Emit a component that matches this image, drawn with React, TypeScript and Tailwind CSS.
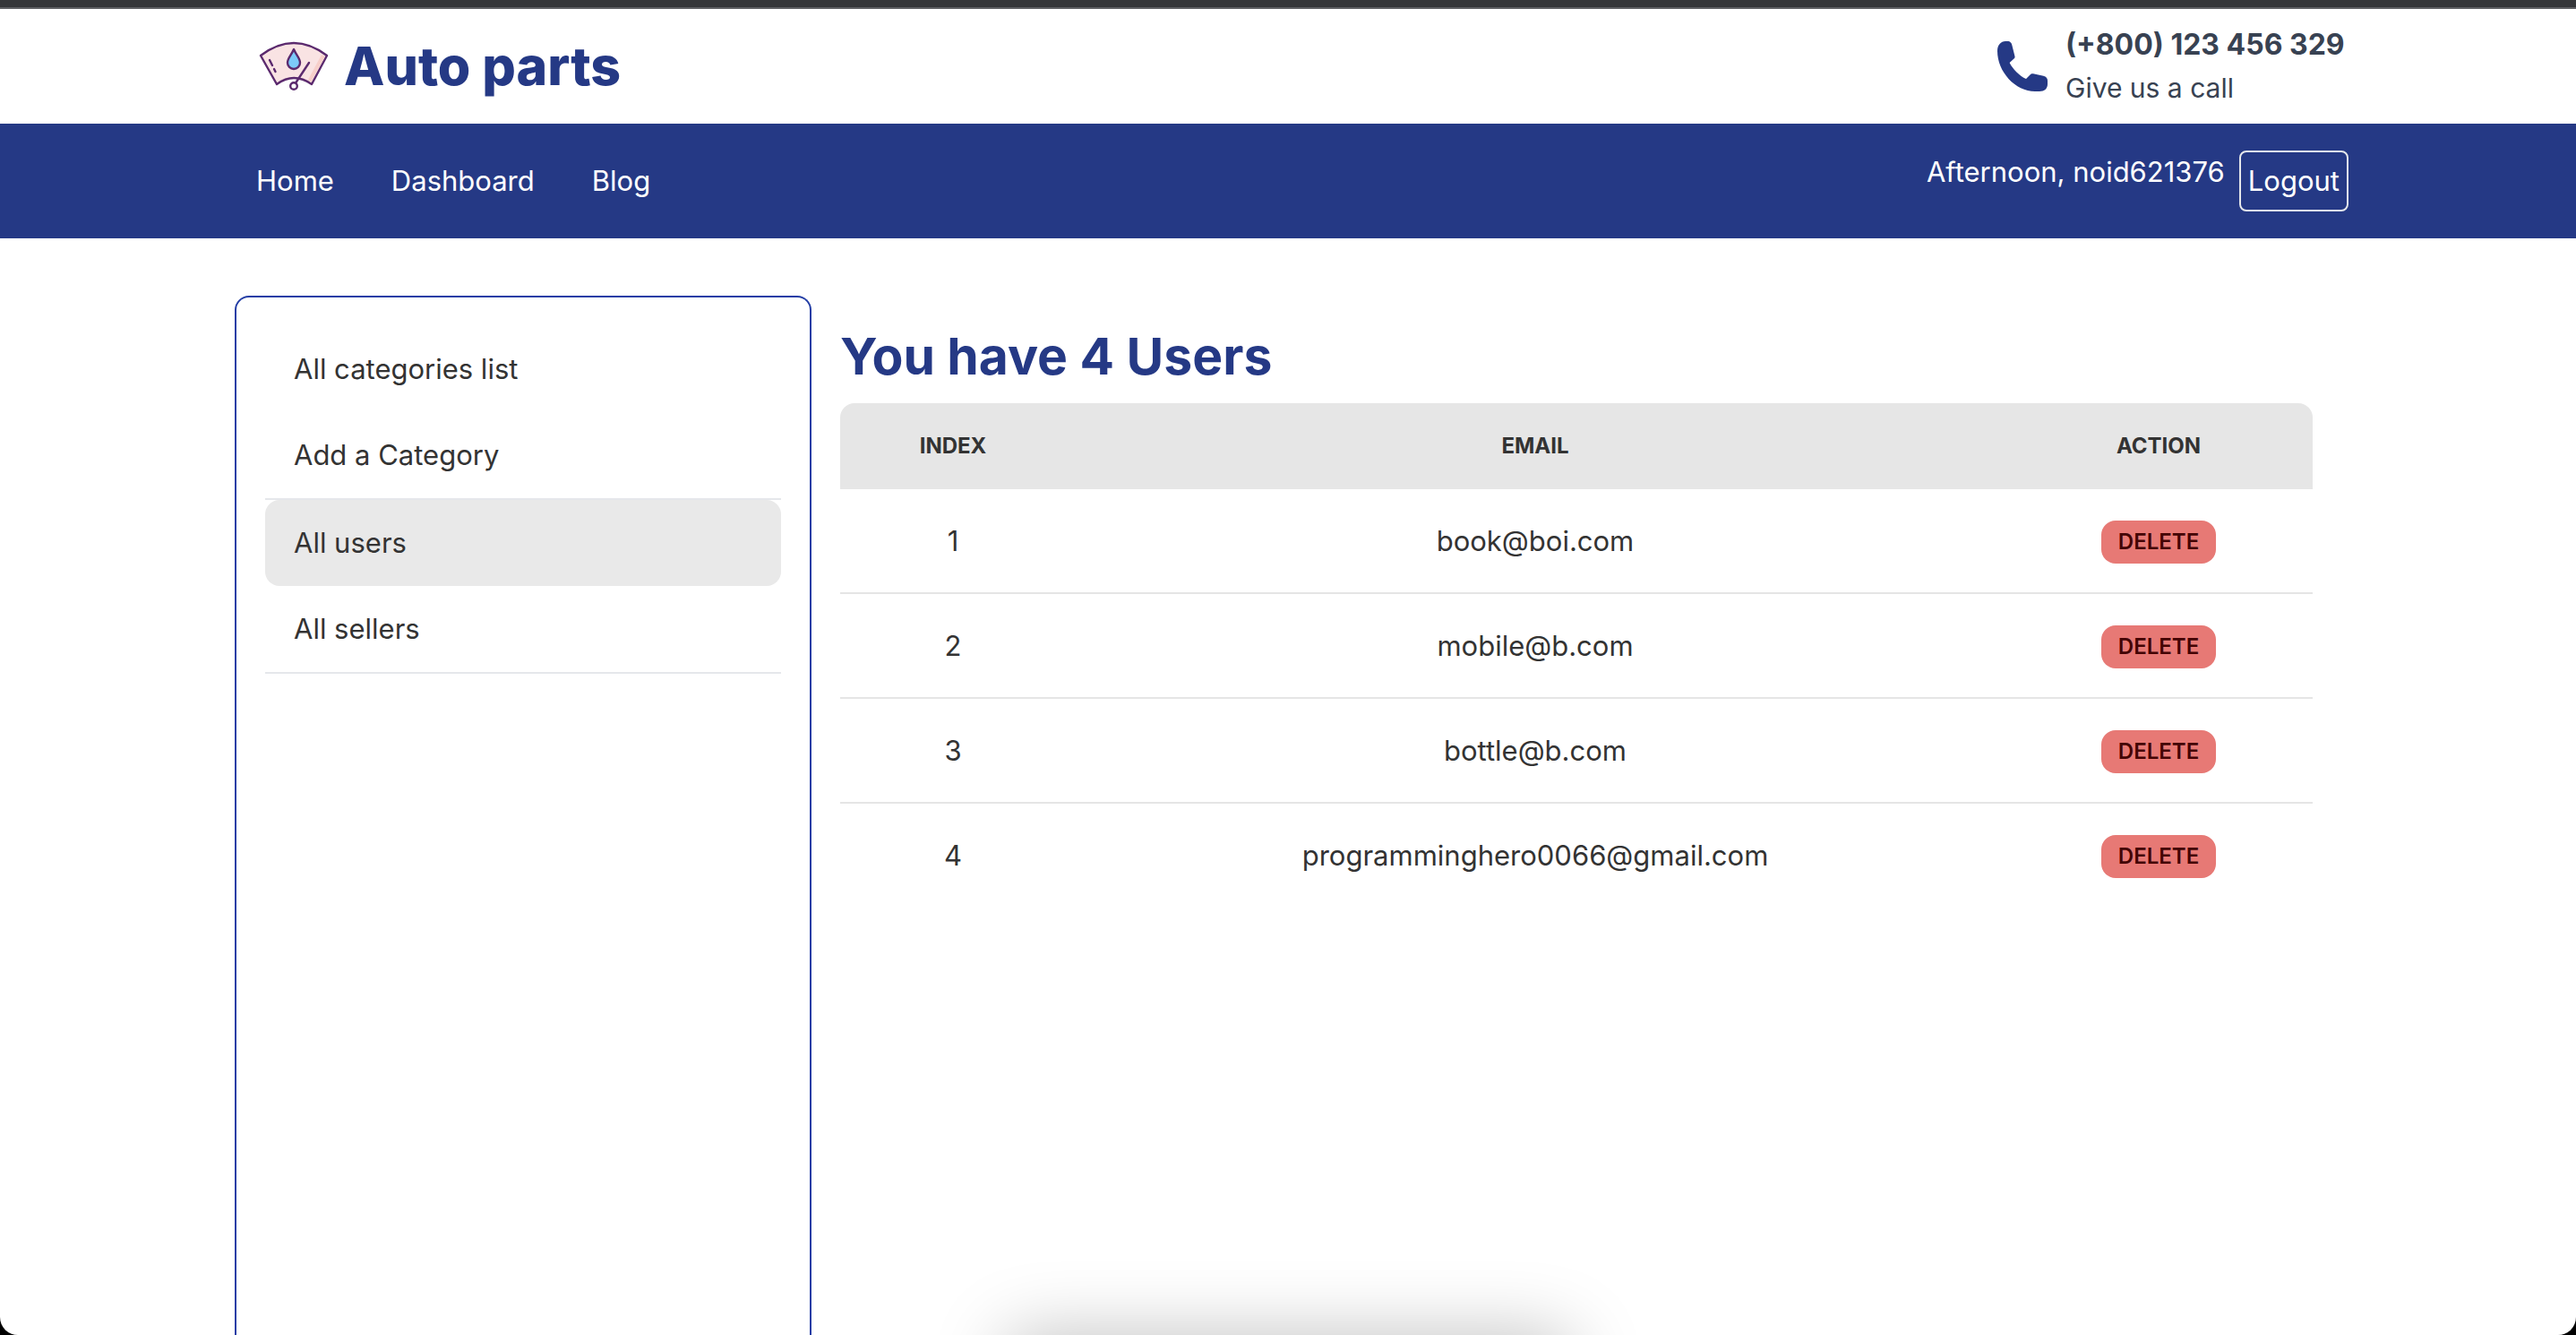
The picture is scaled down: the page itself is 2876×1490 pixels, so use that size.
const navLinks = ["Home", "Dashboard", "Blog"];

const menu = [
  { label: "All categories list", active: false, ruled: false },
  { label: "Add a Category", active: false, ruled: true },
  { label: "All users", active: true, ruled: false },
  { label: "All sellers", active: false, ruled: true },
];

const users = ["book@boi.com", "mobile@b.com", "bottle@b.com", "programminghero0066@gmail.com"];

function WiperLogo() {
  return (
    <svg viewBox="0 0 84 60" className="h-15 w-21 shrink-0" fill="none" stroke="#5b2a6e" strokeWidth="2.4" strokeLinecap="round" strokeLinejoin="round" aria-hidden="true">
      <path d="M5 18Q42 -10 79 18L62 50Q42 36 23 50Z" fill="#f9e3e3" />
      <path d="M73 17L58 45L61 48L77 19Z" fill="#f7cfca" stroke="none" />
      <path d="M42 11C39 18 35 21 35 26a7 7 0 0 0 14 0C49 21 45 18 42 11Z" fill="#7ccaf9" />
      <path d="M15 23l3 6M20 33l1.500 3M59 26L44.500 48" />
      <circle cx="42" cy="52" r="3.800" fill="#fff" />
    </svg>
  );
}

function PhoneIcon() {
  return (
    <svg viewBox="0 0 56 56" className="size-14 shrink-0" fill="currentColor" aria-hidden="true">
      <path d="M0 11C0 4 4 0 9 0H11C14.500 0 16 2 16.500 5L19.500 17C19.700 18 19.300 19 18.500 19.600L13.600 24C17 31 25 39 32 42L36.500 37.500C37.500 36.300 38.500 36 40 36.300L51.500 38.700C54.500 39.500 56 41.500 56 44V48C56 53 52.500 56 47 56H42C20 56 0 34 0 11Z" />
    </svg>
  );
}

export default function App() {
  return (
    <div className="relative flex h-screen flex-col overflow-hidden bg-black font-['Inter',sans-serif] text-[31px] leading-[48px] text-[#333333]">
      <div className="h-[10px] shrink-0 border-b-2 border-[#5f6063] bg-[#353639]" />
      <div className="flex min-h-0 flex-1 flex-col overflow-hidden rounded-b-[20px] bg-white">
        <header className="flex shrink-0 items-center justify-between px-[254px] py-4">
          <a href="#home" className="flex items-center gap-3.5 pl-8 text-[#253985]">
            <WiperLogo />
            <span className="text-[59px] leading-[72px] font-extrabold">Auto parts</span>
          </a>
          <div className="flex items-center gap-5">
            <span className="text-[#253985]">
              <PhoneIcon />
            </span>
            <div className="min-w-[316px] text-[#384252]">
              <p className="text-[32px] leading-[48px] font-bold">(+800) 123 456 329</p>
              <p className="text-[30px] leading-[48px]">Give us a call</p>
            </div>
          </div>
        </header>

        <nav className="flex h-32 shrink-0 items-center justify-between bg-[#253985] px-[254px] text-white">
          <div className="flex">
            {navLinks.map((link) => (
              <a key={link} href={`#${link.toLowerCase()}`} className="px-8">
                {link}
              </a>
            ))}
          </div>
          <div className="flex items-start gap-4">
            <span>Afternoon, noid621376</span>
            <button type="button" className="rounded-lg border-2 border-gray-200 p-2">
              Logout
            </button>
          </div>
        </nav>

        <main className="flex min-h-0 flex-1 px-[262px] pt-16">
          <aside className="w-[644px] shrink-0 rounded-t-2xl border-2 border-b-0 border-[#233da5] p-8">
            <ul>
              {menu.map((item) => (
                <li key={item.label} className={item.ruled ? "border-b-2 border-gray-200" : ""}>
                  <a href="#menu" className={item.active ? "block rounded-2xl bg-[#e9e9e9] px-8 py-6" : "block px-8 py-6"}>
                    {item.label}
                  </a>
                </li>
              ))}
            </ul>
          </aside>

          <section className="flex-1 p-8">
            <h1 className="pb-4 text-[57px] leading-[72px] font-bold text-[#253985]">You have 4 Users</h1>
            <table className="w-full table-fixed text-center">
              <thead>
                <tr className="h-24 text-[24px] leading-8">
                  <th className="w-[252px] rounded-tl-2xl bg-[#e6e6e6] font-bold">INDEX</th>
                  <th className="bg-[#e6e6e6] font-bold">EMAIL</th>
                  <th className="w-[344px] rounded-tr-2xl bg-[#e6e6e6] font-bold">ACTION</th>
                </tr>
              </thead>
              <tbody>
                {users.map((email, i) => (
                  <tr key={email} className="h-[117px] border-b-2 border-[#e5e5e5] first:h-[116px] last:border-b-0">
                    <td>{i + 1}</td>
                    <td>{email}</td>
                    <td>
                      <button type="button" className="inline-flex h-12 items-center rounded-2xl bg-[#e77975] px-[19px] align-middle text-[24px] font-semibold text-[#440404]">
                        DELETE
                      </button>
                    </td>
                  </tr>
                ))}
              </tbody>
            </table>
          </section>
        </main>
      </div>
      <div className="pointer-events-none absolute top-full left-[39%] h-20 w-[22%] rounded-3xl shadow-[0_0_80px_0_rgba(0,0,0,0.25)]" />
    </div>
  );
}
